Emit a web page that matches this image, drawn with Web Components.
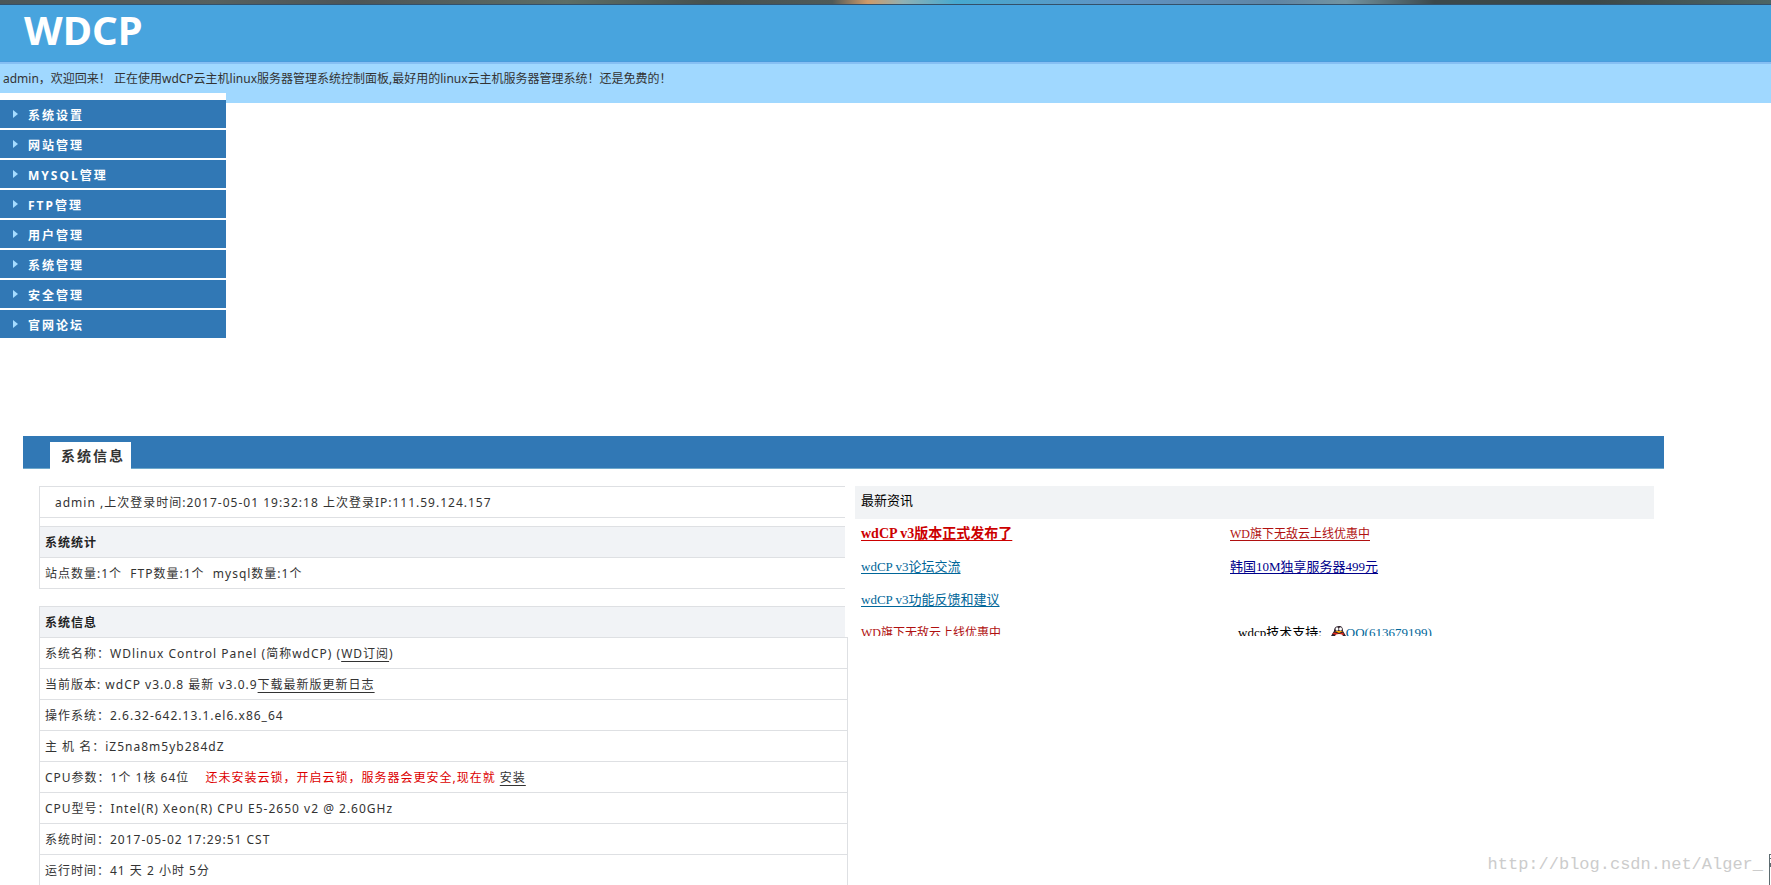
<!DOCTYPE html>
<html lang="zh-CN">
<head>
<meta charset="utf-8">
<title>WDCP</title>
<style>
html{overflow:hidden}
body{margin:0;background:#fff;color:#333;font:12px/20px "Noto Sans","Noto Sans CJK SC",sans-serif}
</style>
</head>
<body>
<wd-app></wd-app>
<script>
const define=(name,html)=>customElements.define(name,class extends HTMLElement{
  constructor(){super();this.attachShadow({mode:'open'}).innerHTML=html;}
});

define('wd-header',`<style>
:host{display:block}
.strip{height:4px;border-bottom:1px solid #33506a;background:linear-gradient(90deg,#4b5658 0,#56605f 12%,#4d5557 20%,#5c6d66 32%,#46514f 40%,#4f5a58 47%,#d09a68 49%,#8fb0b4 51%,#46a9d0 54%,#5f93c4 63%,#5f85a4 72%,#7393a0 76%,#3b484b 81%,#3c4848 90%,#4d6565 100%)}
.brand{height:57px;box-sizing:border-box;padding:0 24px;background:#48a4de;border-bottom:1px solid #4a9cdc}
h1{margin:0;color:#fff;font:bold 40px/50px "Noto Sans",sans-serif}
.welcome{height:41px;box-sizing:border-box;padding:5px 3px;border-top:2px solid #86bff3;background:#a0d8ff;line-height:20px}
p{margin:0}
</style><div class="strip"></div><header><div class="brand"><h1>WDCP</h1></div><div class="welcome"><p><slot></slot></p></div></header>`);

define('wd-menu',`<style>
:host{display:block;position:relative;width:226px;margin-top:-10px;padding-top:7px;background:#fff}
nav{display:grid;gap:2px}
</style><nav><slot></slot></nav>`);

define('wd-menu-item',`<style>
:host{display:block}
a{display:flex;align-items:center;gap:10px;height:28px;box-sizing:border-box;padding:4px 0 0 13px;background:#3178b5;color:#fff;font-weight:bold;letter-spacing:2px;text-decoration:none}
svg{width:5px;height:8px;margin-top:-4px}
</style><a href="#"><svg viewBox="0 0 5 8" aria-hidden="true"><path d="M0 0 5 4 0 8z" fill="#a5dcff"/></svg><slot></slot></a>`);

define('wd-panel',`<style>
:host{display:block;margin:98px 107px 0 23px}
.bar{display:flex;align-items:flex-end;height:33px;box-sizing:border-box;padding-left:27px;background:linear-gradient(#3178b5 32px,#6fa9cc 32px)}
h2{margin:0;height:27px;padding:0 6px 0 11px;background:#fff;color:#333;font-size:14px;line-height:28px;letter-spacing:2px}
.body{display:grid;grid-template-columns:minmax(0,806fr) minmax(0,799fr);gap:10px;padding:17px 10px 0 16px}
</style><section><div class="bar"><h2><slot name="tab"></slot></h2></div><div class="body"><slot></slot></div></section>`);

define('wd-status',`<style>
:host{display:block;letter-spacing:1px}
table{width:100%;border-collapse:collapse;border-left:1px solid #dee0e3}
td,th{height:28px;padding:2px 5px 0;border:solid #dee0e3;border-width:1px 0;text-align:left;font-weight:normal}
th{background:#f1f3f6;color:#222;font-weight:bold}
.login td{padding-left:15px}
.gap td{height:8px;padding:0}
.info{margin-top:17px}
.info th{border-bottom:0}
.red{color:#d00;margin:0 0 0 12px}
a{color:inherit;text-underline-offset:3px}
.rows{width:calc(100% + 3px);border-collapse:separate;border-spacing:0;border:0}
.rows td{border:1px solid #dee0e3;border-top:0}
.rows tr:first-child td{border-top:1px solid #dee0e3}
</style>
<table>
<tr class="login"><td>admin ,上次登录时间:2017-05-01 19:32:18 上次登录IP:111.59.124.157</td></tr>
<tr class="gap"><td></td></tr>
<tr><th scope="col">系统统计</th></tr>
<tr><td>站点数量:1个&nbsp; FTP数量:1个&nbsp; mysql数量:1个</td></tr>
</table>
<table class="info"><tr><th scope="col">系统信息</th></tr></table>
<table class="rows">
<tr><td>系统名称：WDlinux Control Panel (简称wdCP) (<a href="#">WD订阅</a>)</td></tr>
<tr><td>当前版本: wdCP v3.0.8 最新 v3.0.9<a href="#">下载最新版更新日志</a></td></tr>
<tr><td>操作系统：2.6.32-642.13.1.el6.x86_64</td></tr>
<tr><td>主 机 名：iZ5na8m5yb284dZ</td></tr>
<tr><td>CPU参数：1个 1核 64位 <span class="red">还未安装云锁，开启云锁，服务器会更安全,现在就</span> <a href="#">安装</a></td></tr>
<tr><td>CPU型号：Intel(R) Xeon(R) CPU E5-2650 v2 @ 2.60GHz</td></tr>
<tr><td>系统时间：2017-05-02 17:29:51 CST</td></tr>
<tr><td>运行时间：41 天 2 小时 5分</td></tr>
</table>`);

define('wd-news',`<style>
:host{display:block;height:150px;overflow:hidden;color:#000;font:13px/31px "Liberation Serif","Noto Sans CJK SC",serif}
h3{margin:0;height:33px;padding:0 6px;background:#f1f3f5;font-size:13px;font-weight:normal;line-height:29px}
.list{display:grid;grid-template-columns:369px 1fr;grid-auto-rows:33px;padding:0 6px;line-height:30px}
a{color:#069;text-underline-offset:2px}
.red{color:#b01010;font-size:12px}
.hot{color:#c00;font-size:14px;font-weight:bold}
.navy{color:#00008b}
.support{display:flex;align-items:center;height:30px;padding-left:8px}
.support svg{width:15px;height:14px;margin-left:9px}
</style><h3>最新资讯</h3><div class="list">
<span><a class="hot" href="#">wdCP v3版本正式发布了</a></span><span><a class="red" href="#">WD旗下无敌云上线优惠中</a></span>
<span><a href="#">wdCP v3论坛交流</a></span><span><a class="navy" href="#">韩国10M独享服务器499元</a></span>
<span><a href="#">wdCP v3功能反馈和建议</a></span><span></span>
<span><a class="red" href="#">WD旗下无敌云上线优惠中</a></span>
<span class="support">wdcp技术支持:<svg viewBox="0 0 15 14" aria-hidden="true"><path d="M8 0C4 0 3 3 3 5L0 10h15L12 5C12 2 11 0 8 0z" fill="#30222c"/><ellipse cx="6" cy="3" rx="1.500" ry="1.800" fill="#fff"/><ellipse cx="9.500" cy="3" rx="1.500" ry="1.800" fill="#fff"/><path d="M4 5h8L8 7z" fill="#fa0"/><path d="M1 7.500 4 6.500l4 1.500 4-1.500 1 2-5 1.500z" fill="#e32d1d"/><ellipse cx="8" cy="10.500" rx="4" ry="2.500" fill="#fff"/><path d="M2 12h11v2H2z" fill="#fa0"/></svg><a href="#">QQ(613679199)</a></span>
</div>`);

define('wd-mark',`<style>
:host{position:absolute;right:8px;bottom:10px;color:#ccc;font:17px/20px "Liberation Mono",monospace}
</style><slot></slot>`);

/* edge of the docked tool window at the lower right */
define('wd-dock',`<style>
:host{position:absolute;right:0;bottom:0;width:2px;height:31px;box-sizing:border-box;border-left:1px solid #5d6b70;background:linear-gradient(#5d6b70 1px,#fff 1px 4px,#5d6b70 4px 5px,#fff 5px 9px,#5d6b70 9px 13px,#fff 13px)}
</style>`);

define('wd-app',`<style>:host{display:block}</style>
<wd-header>admin，欢迎回来！ 正在使用wdCP云主机linux服务器管理系统控制面板,最好用的linux云主机服务器管理系统！还是免费的！</wd-header>
<wd-menu><wd-menu-item>系统设置</wd-menu-item><wd-menu-item>网站管理</wd-menu-item><wd-menu-item>MYSQL管理</wd-menu-item><wd-menu-item>FTP管理</wd-menu-item><wd-menu-item>用户管理</wd-menu-item><wd-menu-item>系统管理</wd-menu-item><wd-menu-item>安全管理</wd-menu-item><wd-menu-item>官网论坛</wd-menu-item></wd-menu>
<wd-panel><span slot="tab">系统信息</span><wd-status></wd-status><wd-news></wd-news></wd-panel>
<wd-mark>http://blog.csdn.net/Alger_</wd-mark><wd-dock></wd-dock>`);
</script>
</body>
</html>
